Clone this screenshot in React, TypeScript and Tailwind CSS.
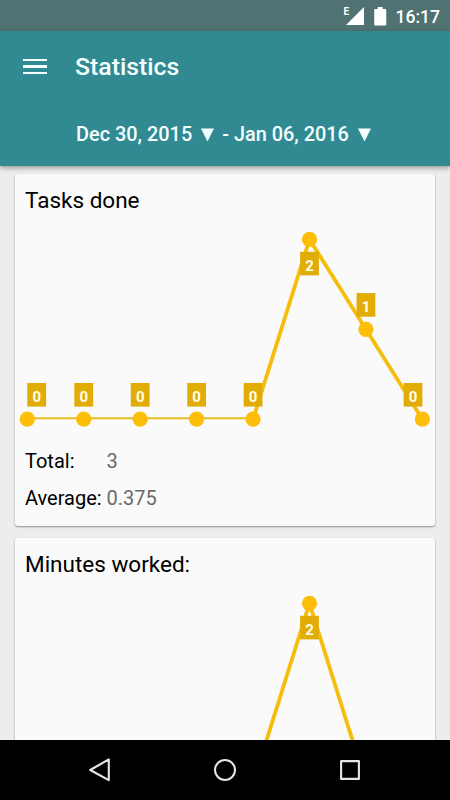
type Stat = {
  title: string;
  points: number[];
  total: string;
  average: string;
};

const stats: Stat[] = [
  { title: "Tasks done", points: [0, 0, 0, 0, 0, 2, 1, 0], total: "3", average: "0.375" },
  { title: "Minutes worked:", points: [0, 0, 0, 0, 0, 2, 0, 0], total: "2", average: "0.25" },
];

export default function App() {
  return (
    <div className="flex h-[800px] w-[450px] flex-col overflow-hidden bg-[#ededed] font-['Roboto',sans-serif]">
      <StatusBar />
      <Header />
      <main className="flex min-h-0 flex-1 flex-col gap-3 overflow-hidden px-[15px] pt-2">
        {stats.map((stat) => (
          <StatCard key={stat.title} stat={stat} />
        ))}
      </main>
      <NavigationBar />
    </div>
  );
}

function StatusBar() {
  return (
    <div className="flex h-[31px] shrink-0 items-center justify-end bg-[#507273] pr-[10px] text-white">
      <span className="mb-[7px] text-[10px] leading-3 font-bold">E</span>
      <svg className="mr-[10px] -ml-[3px] h-[18px] w-[18px]" viewBox="0 0 18 18" fill="white">
        <path d="M18 0V18H0Z" />
      </svg>
      <svg className="mr-[9px] h-[20px] w-[12.5px]" viewBox="0 0 12 20" fill="white">
        <path d="M3.5 1H8.5V3H11Q12 3 12 4V18.5Q12 19.5 11 19.5H1Q0 19.5 0 18.5V4Q0 3 1 3H3.5Z" />
      </svg>
      <span className="pt-[2px] text-[17.5px] leading-5 font-medium">16:17</span>
    </div>
  );
}

function Header() {
  return (
    <header className="relative z-10 h-[135px] shrink-0 bg-[#318a92] text-[#f4ffff] shadow-[0_2px_5px_rgba(0,0,0,0.35)]">
      <div className="flex h-[70px] items-center pl-[23px]">
        <div className="mr-7 flex w-6 flex-col gap-[4px] pt-px">
          <span className="h-[2.5px] bg-current" />
          <span className="h-[2.5px] bg-current" />
          <span className="h-[2.5px] bg-current" />
        </div>
        <h1 className="pt-px text-[24.8px] leading-8 font-medium">Statistics</h1>
      </div>
      <div className="flex h-[65px] items-center pt-[3px] pl-[76px] text-[19.9px] leading-[30px] font-medium">
        <span>Dec 30, 2015</span>
        <DropArrow />
        <span>- Jan 06, 2016</span>
        <DropArrow />
      </div>
    </header>
  );
}

function DropArrow() {
  return (
    <svg className="mr-[8px] ml-[9px] h-[14px] w-[13px]" viewBox="0 0 13 14" fill="currentColor">
      <path d="M0 0.5H13L6.5 13.5Z" />
    </svg>
  );
}

function StatCard({ stat }: { stat: Stat }) {
  return (
    <section className="h-[352px] shrink-0 rounded-[3px] bg-[#fafafa] shadow-[0_1px_2px_rgba(0,0,0,0.4)]">
      <h2 className="h-[50px] pt-[11px] pl-[10px] text-[22.5px] leading-[30px] text-black">{stat.title}</h2>
      <LineChart points={stat.points} />
      <dl className="grid grid-cols-[81.5px_1fr] pt-[9px] pl-[10px] text-[20px] leading-[37px] text-black">
        <dt>Total:</dt>
        <dd className="text-[#6a6a6a]">{stat.total}</dd>
        <dt>Average:</dt>
        <dd className="text-[#6a6a6a]">{stat.average}</dd>
      </dl>
    </section>
  );
}

const LABEL_W = 18.8;
const LABEL_H = 23.6;

const chartX = (index: number) => 12.3 + index * 56.44;
const chartY = (value: number) => 195.2 - value * 89.9;

function LineChart({ points }: { points: number[] }) {
  const max = Math.max(...points);
  const last = points.length - 1;

  return (
    <svg className="block h-[210px] w-[420px]" viewBox="0 0 420 210">
      {points.slice(1).map((value, i) => {
        const flat = value === 0 && points[i] === 0;
        // the lower half of a line on the axis is clipped away
        const shift = flat ? -0.9 : 0;
        return (
          <line
            key={i}
            x1={chartX(i)}
            y1={chartY(points[i]) + shift}
            x2={chartX(i + 1)}
            y2={chartY(value) + shift}
            stroke={flat ? "#e9bd22" : "#f5be0c"}
            strokeWidth={flat ? 1.9 : 3.8}
          />
        );
      })}
      {points.map((value, i) => {
        const x = chartX(i);
        const y = chartY(value);
        const left = i === 0 ? x : i === last ? x - LABEL_W : x - LABEL_W / 2;
        const top = value === max ? y + 12.4 : y - 12.6 - LABEL_H;
        return (
          <g key={i}>
            <circle cx={x} cy={y} r="7.6" fill="#fcbe08" />
            <rect x={left} y={top} width={LABEL_W} height={LABEL_H} fill="#e2ac06" />
            <text
              x={left + LABEL_W / 2}
              y={top + 18.8}
              textAnchor="middle"
              className="fill-[#fffde8] text-[15px] font-bold"
            >
              {value}
            </text>
          </g>
        );
      })}
    </svg>
  );
}

function NavigationBar() {
  return (
    <nav className="flex h-[60px] shrink-0 items-center justify-center gap-[101px] bg-black">
      <svg className="size-6" viewBox="0 0 24 24" fill="none" stroke="#e6e6e6" strokeWidth="2.1" strokeLinejoin="round">
        <path d="M20.8 1.4V22.2L2.2 12Z" />
      </svg>
      <svg className="size-6" viewBox="0 0 24 24" fill="none" stroke="#e6e6e6" strokeWidth="2">
        <circle cx="12" cy="12" r="10" />
      </svg>
      <svg className="size-6" viewBox="0 0 24 24" fill="none" stroke="#e6e6e6" strokeWidth="2.1" strokeLinejoin="round">
        <rect x="3.1" y="3.1" width="17.8" height="17.8" />
      </svg>
    </nav>
  );
}
